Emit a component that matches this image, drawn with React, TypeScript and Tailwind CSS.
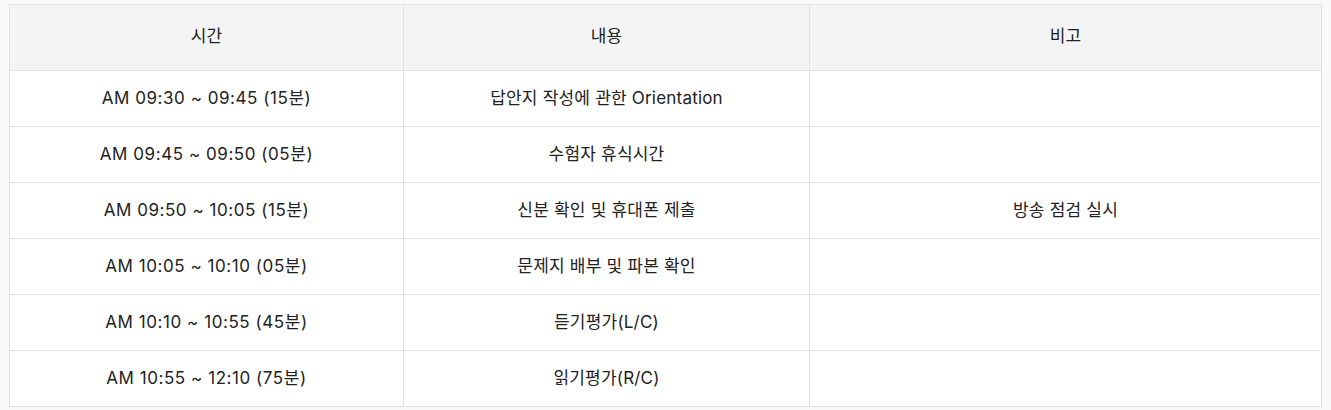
const rows = [
  { time: "AM 09:30 ~ 09:45 (15분)", content: "답안지 작성에 관한 Orientation", note: "" },
  { time: "AM 09:45 ~ 09:50 (05분)", content: "수험자 휴식시간", note: "" },
  { time: "AM 09:50 ~ 10:05 (15분)", content: "신분 확인 및 휴대폰 제출", note: "방송 점검 실시" },
  { time: "AM 10:05 ~ 10:10 (05분)", content: "문제지 배부 및 파본 확인", note: "" },
  { time: "AM 10:10 ~ 10:55 (45분)", content: "듣기평가(L/C)", note: "" },
  { time: "AM 10:55 ~ 12:10 (75분)", content: "읽기평가(R/C)", note: "" },
];

const App = () => {
  return (
    <div
      className="h-[410px] bg-[#f9f9f9] pl-[9px] pt-[4px] text-[#222222]"
      style={{ fontFamily: '"Inter", "Noto Sans CJK KR", sans-serif' }}
    >
      <table className="w-[1313px] table-fixed border-collapse bg-white text-[17px] leading-[24px]">
        <colgroup>
          <col className="w-[394px]" />
          <col className="w-[406px]" />
          <col />
        </colgroup>
        <thead>
          <tr className="h-[66px] bg-[#f4f4f4]">
            <th className="border border-[#e2e2e2] pb-[4px] font-normal">시간</th>
            <th className="border border-[#e2e2e2] pb-[4px] font-normal">내용</th>
            <th className="border border-[#e2e2e2] pb-[4px] font-normal">비고</th>
          </tr>
        </thead>
        <tbody>
          {rows.map((row) => (
            <tr key={row.time} className="h-[56px]">
              <td className="border border-[#e2e2e2] pb-px text-center tracking-[0.55px]">{row.time}</td>
              <td className="border border-[#e2e2e2] pb-px text-center tracking-[0.2px]">{row.content}</td>
              <td className="border border-[#e2e2e2] pb-px text-center tracking-[0.2px]">{row.note}</td>
            </tr>
          ))}
        </tbody>
      </table>
    </div>
  );
};

export default App;
